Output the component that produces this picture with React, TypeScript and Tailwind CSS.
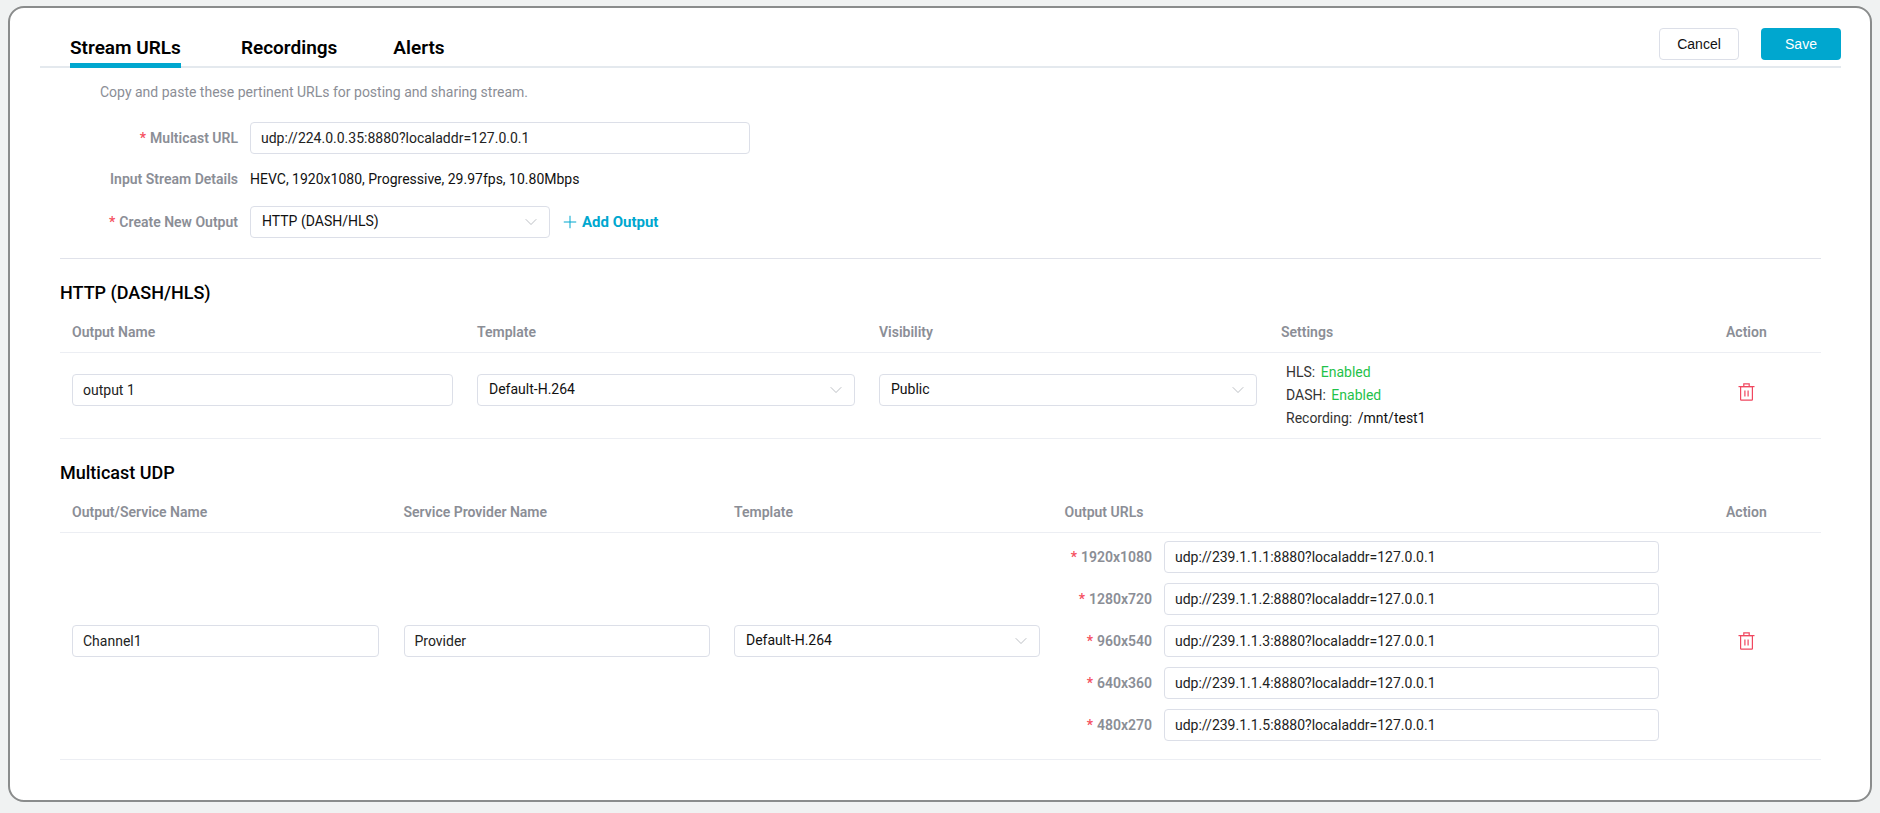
import { ChevronDown, Plus } from "lucide-react";

const inputClass =
    "h-8 rounded-[4px] border border-[#dcdfe8] bg-white px-[10px] text-sm text-[#222] outline-none font-[Roboto,sans-serif]";

const Req = () => <span className="mr-1 text-[#f5515f]">*</span>;

const Select = ({ value, className }: { value: string; className: string }) => (
    <div className={`flex h-8 items-center justify-between rounded-[4px] border border-[#dcdfe8] bg-white pl-[11px] pr-[8px] ${className}`}>
        <span className="-mt-0.5 text-sm text-[#111]">{value}</span>
        <ChevronDown size={20} strokeWidth={0.8} className="text-[#9a9ea6]" />
    </div>
);

const Trash = () => (
    <svg width="17" height="18" viewBox="0 0 17 18" fill="none" stroke="#f0475f" strokeWidth="1.2" className="mx-auto">
        <path d="M0.5 3.6H16.5" />
        <path d="M5.8 3.4V0.9H11.2V3.4" />
        <rect x="2.6" y="3.6" width="11.8" height="13.6" rx="0.6" />
        <path d="M6.9 7.4V13.4M10.1 7.4V13.4" />
    </svg>
);

const headCell = "text-sm leading-5 font-semibold text-[#8b8e96]";

const urls = [
    { label: "1920x1080", value: "udp://239.1.1.1:8880?localaddr=127.0.0.1" },
    { label: "1280x720", value: "udp://239.1.1.2:8880?localaddr=127.0.0.1" },
    { label: "960x540", value: "udp://239.1.1.3:8880?localaddr=127.0.0.1" },
    { label: "640x360", value: "udp://239.1.1.4:8880?localaddr=127.0.0.1" },
    { label: "480x270", value: "udp://239.1.1.5:8880?localaddr=127.0.0.1" },
];

const App = () => {
    return (
        <div className="h-[813px] overflow-hidden bg-[#f0f2f2] pl-2 pr-2 pt-1.5 font-[Roboto,sans-serif]">
            <div className="h-[796px] rounded-2xl border-2 border-[#8a8c8c] bg-white">
                {/* tabs + actions */}
                <div className="ml-[30px] mr-[29px] flex h-[60px] justify-between border-b-2 border-[#e4e9ee]">
                    <div className="flex gap-[56px] pl-[30px] text-[19px] font-semibold text-black">
                        <div className="h-[60px] border-b-[5px] border-[#00a7cf] pt-[26px] leading-[28px]">Stream URLs</div>
                        <div className="ml-[4px] pt-[26px] leading-[28px]">Recordings</div>
                        <div className="pt-[26px] leading-[28px]">Alerts</div>
                    </div>
                    <div className="flex gap-[22px] pt-5 font-['Liberation_Sans',sans-serif]">
                        <button className="h-8 w-20 rounded-[4px] border border-[#dcdfe8] bg-white text-sm text-[#111]">Cancel</button>
                        <button className="h-8 w-20 rounded-[4px] bg-[#00a7cf] text-sm text-white">Save</button>
                    </div>
                </div>

                <div className="ml-[50px] mr-[49px]">
                    <p className="mt-3.5 pl-10 text-sm leading-5 text-[#8b8e96]">
                        Copy and paste these pertinent URLs for posting and sharing stream.
                    </p>

                    <div className="mt-5 flex items-center gap-3">
                        <label className="w-[178px] text-right text-sm font-semibold text-[#8b8e96]">
                            <Req />
                            Multicast URL
                        </label>
                        <input readOnly value="udp://224.0.0.35:8880?localaddr=127.0.0.1" className={`${inputClass} w-[500px]`} />
                    </div>
                    <div className="mt-[15px] flex items-center gap-3">
                        <label className="w-[178px] text-right text-sm leading-5 font-semibold text-[#8b8e96]">Input Stream Details</label>
                        <span className="text-sm leading-5 text-[#111]">HEVC, 1920x1080, Progressive, 29.97fps, 10.80Mbps</span>
                    </div>
                    <div className="mt-[17px] flex items-center gap-3">
                        <label className="w-[178px] text-right text-sm font-semibold text-[#8b8e96]">
                            <Req />
                            Create New Output
                        </label>
                        <Select value="HTTP (DASH/HLS)" className="w-[300px]" />
                        <div className="-ml-0.5 flex items-center gap-[2px] text-[15px] font-bold text-[#00a7cf]">
                            <Plus size={20} strokeWidth={1.2} />
                            Add Output
                        </div>
                    </div>
                    <div className="mt-5 border-t border-[#e0e2ea]" />

                    <h2 className="mt-[22px] text-lg leading-6 font-medium text-black">HTTP (DASH/HLS)</h2>
                    <div className="grid grid-cols-[381px_378px_378px_1fr_41px] gap-x-6 border-b border-[#eceef3] pb-2.5 pl-3 pr-[54px] pt-[17px]">
                        <div className={headCell}>Output Name</div>
                        <div className={headCell}>Template</div>
                        <div className={headCell}>Visibility</div>
                        <div className={headCell}>Settings</div>
                        <div className={headCell}>Action</div>
                    </div>
                    <div className="grid h-[86px] grid-cols-[381px_378px_378px_1fr_41px] items-start gap-x-6 border-b border-[#eceef3] pl-3 pr-[54px]">
                        <input readOnly value="output 1" className={`${inputClass} mt-[21px] w-full`} />
                        <Select value="Default-H.264" className="mt-[21px]" />
                        <Select value="Public" className="mt-[21px]" />
                        <div className="pl-[5px] pt-[8px] text-sm leading-[23px] text-[#111]">
                            <div>
                                <span className="text-[#333]">HLS:</span> <span className="ml-0.5 text-[#1fc24a]">Enabled</span>
                            </div>
                            <div>
                                <span className="text-[#333]">DASH:</span> <span className="ml-0.5 text-[#1fc24a]">Enabled</span>
                            </div>
                            <div>
                                <span className="text-[#333]">Recording:</span> <span className="ml-0.5">/mnt/test1</span>
                            </div>
                        </div>
                        <div className="pt-[30px]">
                            <Trash />
                        </div>
                    </div>

                    <h2 className="mt-[22px] text-lg leading-6 font-medium text-black">Multicast UDP</h2>
                    <div className="grid grid-cols-[307px_306px_306px_1fr_41px] gap-x-[24.5px] border-b border-[#eceef3] pb-2.5 pl-3 pr-[54px] pt-[17px]">
                        <div className={headCell}>Output/Service Name</div>
                        <div className={headCell}>Service Provider Name</div>
                        <div className={headCell}>Template</div>
                        <div className={headCell}>Output URLs</div>
                        <div className={headCell}>Action</div>
                    </div>
                    <div className="grid grid-cols-[307px_306px_306px_1fr_41px] items-center gap-x-[24.5px] border-b border-[#eceef3] pb-[18px] pl-3 pr-[54px] pt-2">
                        <input readOnly value="Channel1" className={`${inputClass} w-full`} />
                        <input readOnly value="Provider" className={`${inputClass} w-full`} />
                        <Select value="Default-H.264" className="" />
                        <div className="flex flex-col gap-2.5">
                            {urls.map((u) => (
                                <div key={u.label} className="flex items-center gap-3">
                                    <label className="w-[87.5px] text-right text-sm font-semibold text-[#8b8e96]">
                                        <Req />
                                        {u.label}
                                    </label>
                                    <input readOnly value={u.value} className={`${inputClass} w-[495px]`} />
                                </div>
                            ))}
                        </div>
                        <Trash />
                    </div>
                </div>
            </div>
        </div>
    );
};

export default App;
